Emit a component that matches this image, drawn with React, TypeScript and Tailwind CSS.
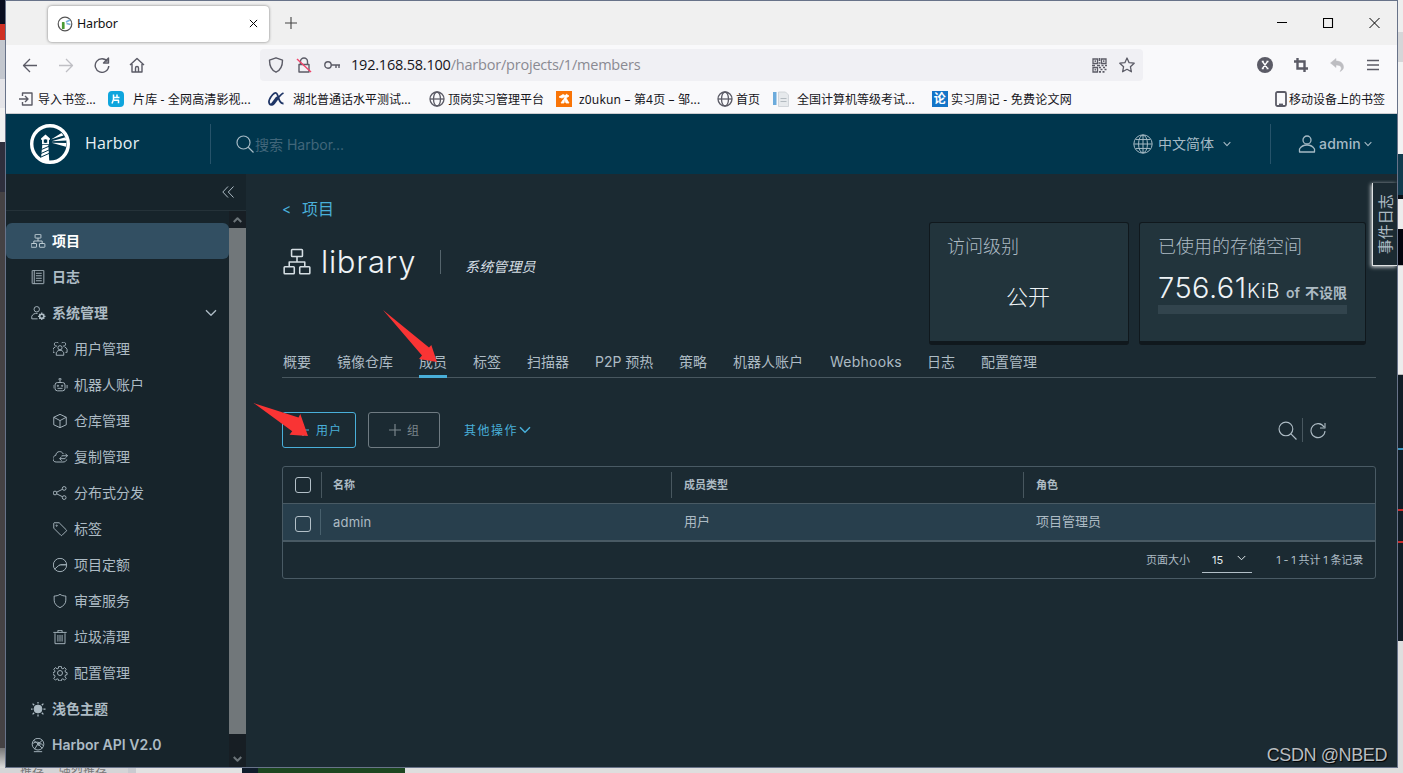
import type { ReactNode } from "react";

type IconProps = { className?: string; children: ReactNode; box?: string; stroke?: number };

function Svg({ className, children, box = "0 0 36 36", stroke = 2.2 }: IconProps) {
    return (
        <svg viewBox={box} className={className} fill="none" stroke="currentColor" strokeWidth={stroke} strokeLinejoin="round">
            {children}
        </svg>
    );
}

const paths: Record<string, ReactNode> = {
    org: <><rect x="11" y="2" width="14" height="9" rx="1" /><rect x="1.5" y="24" width="13" height="9" rx="1" /><rect x="21.5" y="24" width="13" height="9" rx="1" /><path d="M18 11v7M8 24v-6h20v6" /></>,
    log: <><rect x="4" y="2" width="28" height="32" rx="1" /><path d="M9 2v32M13 9h14M13 15h14M13 21h14M13 27h14" /></>,
    adminCog: <><circle cx="15" cy="9" r="6.5" /><path d="M17 32H3v-6c2-5 7-8 14-7" /><circle cx="27" cy="26" r="5" strokeWidth="4" /><path d="M27 17v4M27 31v4M18 26h4M32 26h4M21 20l3 3M30 29l3 3M33 20l-3 3M24 29l-3 3" strokeWidth="3" /></>,
    users: <><circle cx="18" cy="15" r="5" /><path d="M9 33v-6c2-4 5-6 9-6s7 2 9 6v6z" /><path d="M11 11a5 5 0 1 1 3-7M7 13c-3 1-5 3-6 6v7h4M25 11a5 5 0 1 0-3-7M29 13c3 1 5 3 6 6v7h-4" /></>,
    robot: <><circle cx="18" cy="4" r="2.5" /><path d="M18 7v5" /><rect x="6" y="12" width="24" height="20" rx="6" /><path d="M1 18v8M35 18v8M12 26h12" /><circle cx="13" cy="20" r="1.5" /><circle cx="23" cy="20" r="1.5" /></>,
    cube: <path d="M18 2l15 7v18l-15 7-15-7V9zM3 9l15 8 15-8M18 17v17" />,
    cloud: <><path d="M26 11c-2-4-5-6-9-6-5 0-9 4-9 9-4 1-7 4-7 8 0 5 3 8 8 8h16c5 0 8-2 9-6" /><path d="M36 15H22M31 10l5 5-5 5M31 22H18M22 17l-5 5 5 5" /></>,
    share: <><circle cx="28" cy="7" r="4.5" /><circle cx="28" cy="29" r="4.5" /><circle cx="6" cy="18" r="4.5" /><path d="M10 16l14-7M10 20l14 7" /></>,
    tag: <><path d="M3 4v12l17 17c1 1 2 1 3 0l10-10c1-1 1-2 0-3L16 3H4z" /><circle cx="10" cy="10" r="1.5" /></>,
    quota: <><circle cx="18" cy="18" r="16" /><path d="M5 28l9-8 5-3h15" /><path d="M15 19h18" strokeWidth="1" /></>,
    shield: <path d="M18 2c4 3 9 4 14 4v10c0 9-6 14-14 18C10 30 4 25 4 16V6c5 0 10-1 14-4z" />,
    trash: <path d="M6 9v25h24V9M2 7h32M13 6V2h10v4M13 13v16M18 13v16M23 13v16" />,
    cog: <><circle cx="18" cy="18" r="6" /><path d="M15 2h6l1 5 3 1 4-3 4 4-3 4 1 3 4 1v5l-4 1-1 4 3 4-4 4-4-3-3 1-1 4h-6l-1-4-3-1-4 3-4-4 3-4-1-4-4-1v-5l4-1 1-3-3-4 4-4 4 3 3-1z" /></>,
    sun: <><circle cx="18" cy="18" r="9.5" fill="currentColor" /><path d="M18 0v5M18 31v5M0 18h5M31 18h5M5 5l4 4M27 27l4 4M31 5l-4 4M9 27l-4 4" strokeWidth="3" /></>,
    api: <><circle cx="18" cy="16" r="14" /><path d="M8 34h20M8 7l12 10 8 9M28 7L16 18l-6 10M5 15c8-7 18-4 25 4" /><circle cx="20" cy="16" r="3" /></>,
    search: <><circle cx="15" cy="15" r="13" /><path d="M24.500 24.500L35 35" /></>,
    refresh: <path d="M30 12A14 14 0 1 0 32 20M32 4v10H22" />,
    globe: <><circle cx="18" cy="18" r="16.500" /><path d="M18 2v32M2 18h32M5 10h26M5 26h26" /><ellipse cx="18" cy="18" rx="8" ry="16" /></>,
    user: <><circle cx="18" cy="10" r="8" /><path d="M3 34v-6c3-5 8-8 15-8s12 3 15 8v6z" /></>,
    down: <path d="M3 10l15 15 15-15" />,
};

function Ico({ name, className, stroke }: { name: string; className?: string; stroke?: number }) {
    return <Svg className={className} stroke={stroke}>{paths[name]}</Svg>;
}

function Chevron({ className, stroke = 4 }: { className?: string; stroke?: number }) {
    return <Svg box="0 6 36 24" stroke={stroke} className={className}>{paths.down}</Svg>;
}

function TabBar() {
    return (
        <div className="flex h-11 items-center bg-[#f0f0f0] pl-[42px]">
            <div className="mt-px flex h-9 w-[221px] items-center rounded bg-white pr-[11px] pl-[9px] shadow-[0_0_3px_rgba(0,0,0,0.5)]">
                <Svg box="0 0 16 16" stroke={1.2} className="h-4 w-4 text-[#555]">
                    <circle cx="8" cy="8" r="6.8" />
                    <path d="M5.500 12.500V6.500h1.500v6z" fill="#4a9b35" stroke="#4a9b35" />
                    <path d="M9 6l4-2M9.500 7.500l4 1" stroke="#79b2dc" strokeWidth="1.800" />
                </Svg>
                <span className="ml-1 flex-1 pt-0.5 text-[12.500px] tracking-[-0.2px] text-[#111]">Harbor</span>
                <Svg box="0 0 10 10" stroke={1.1} className="h-[9px] w-[9px] text-black"><path d="M1 1l8 8M9 1L1 9" /></Svg>
            </div>
            <Svg box="0 0 12 12" stroke={1.1} className="ml-4 h-3 w-3 text-[#444]"><path d="M6 0v12M0 6h12" /></Svg>
            <div className="mr-[17px] ml-auto flex items-center gap-[35px] text-black">
                <Svg box="0 0 11 11" stroke={1} className="h-[11px] w-[11px]"><path d="M0 4.500h10" /></Svg>
                <Svg box="0 0 11 11" stroke={1.1} className="h-[11px] w-[11px]"><path d="M.5.5h9v9H.5z" strokeLinejoin="miter" /></Svg>
                <Svg box="0 0 11 11" stroke={1} className="h-[11px] w-[11px]"><path d="M.5 0l10 10M10.500 0l-10 10" /></Svg>
            </div>
        </div>
    );
}

function Toolbar() {
    return (
        <div className="flex h-10 items-center bg-[#f9f9fb] pl-4 text-[#5b5b66]">
            <Svg box="0 0 16 16" stroke={1.3} className="h-4 w-4"><path d="M15 8.500H1.500M8 2L1.500 8.500 8 15" /></Svg>
            <Svg box="0 0 16 16" stroke={1.3} className="ml-5 h-4 w-4 text-[#bfbfc4]"><path d="M1 8.500h13.500M8 2l6.500 6.500L8 15" /></Svg>
            <Svg box="0 0 16 16" stroke={1.4} className="ml-5 h-4 w-4"><path d="M13.500 4.500A6.800 6.800 0 1 0 14.800 9M14.500 1v5h-5z" /></Svg>
            <Svg box="0 0 16 16" stroke={1.4} className="ml-[19px] h-4 w-4"><path d="M1 8l7-6.500L15 8M3 7v8h10V7M6.500 15v-4a1.500 1.500 0 0 1 3 0v4" /></Svg>
            <div className="ml-[115px] flex h-8 w-[883px] items-center rounded bg-[#f0f0f4] pr-[8px] pl-2">
                <Svg box="0 0 16 16" stroke={1.4} className="h-4 w-4"><path d="M8 .8l6.500 2.400c0 6-2 10-6.500 12C3.500 13.200 1.500 9.200 1.500 3.200z" /></Svg>
                <Svg box="0 0 16 16" stroke={1.4} className="ml-3 h-4 w-4">
                    <path d="M4.500 7V4.500a3.500 3.500 0 0 1 7 0V7M3 7.500h10V15H3z" />
                    <path d="M1 2l14 13" stroke="#f0436a" />
                </Svg>
                <Svg box="0 0 16 16" stroke={1.4} className="ml-3 h-4 w-4"><circle cx="4" cy="8" r="3.200" /><path d="M7 8h9M12 8v3M15 8v3" /></Svg>
                <span className="ml-[11px] font-['Open_Sans'] text-[14.500px] tracking-[-0.21px] whitespace-nowrap text-[#8a8a92]"><span className="text-[#15141a]">192.168.58.100</span>/harbor/projects/1/members</span>
                <Svg box="0 0 15 15" stroke={1.3} className="ml-auto h-[15px] w-[15px]">
                    <path d="M1 1h4.500v4.500H1zM9.500 1H14v4.500H9.500zM1 9.500h4.500V14H1z" strokeLinejoin="miter" />
                    <path d="M2.600 3.200h1.300M11.100 3.200h1.300M2.600 11.700h1.300M7.500 0v3M6.500 5h2M0 7.500h3M5 7.500h3M9.500 7.500h2M13 7.500h2M7 9.500h2M11 9.500h2M8.500 11.500h2M12.500 11.500h2M7 13.800h2M10.500 13.800h2" strokeWidth="1.700" />
                </Svg>
                <Svg box="0 0 16 16" stroke={1.3} className="ml-3 h-4 w-4"><path d="M8 1l2.100 4.700 5.100.5-3.800 3.500 1 5.100L8 12.300l-4.400 2.500 1-5.100L.8 6.200l5.100-.5z" /></Svg>
            </div>
            <div className="ml-[114px] flex items-center">
                <Svg box="0 0 16 16" className="h-4 w-4"><circle cx="8" cy="8" r="8" fill="currentColor" stroke="none" /><path d="M5.500 4.500l5 7M10.500 4.500l-5 7M4.800 4.500h2M9.500 4.500h2M4.800 11.500h2M9.500 11.500h2" stroke="#fff" strokeWidth="1.300" /></Svg>
                <Svg box="0 0 16 16" stroke={2.4} className="ml-5 h-4 w-4"><path d="M4.500 1v10.500H15M1 4.500h10.500V15" strokeLinejoin="miter" /></Svg>
                <Svg box="0 0 16 16" stroke={1.5} className="ml-5 h-4 w-4 text-[#bdbdc1]"><path d="M7 1.500L1.500 6 7 10.500V8c3 0 5 .8 5.300 3 .2 1.500-.8 2.700-1.300 3.500 2-.8 3.800-2.500 3.500-5C14 5.800 11 4 7 4z" fill="currentColor" strokeWidth=".5" /></Svg>
                <Svg box="0 0 12 12" stroke={1.3} className="ml-[22px] h-3 w-3"><path d="M0 1.500h12M0 6h12M0 10.500h12" /></Svg>
            </div>
        </div>
    );
}

function WebGlobe() {
    return <Svg box="0 0 16 16" stroke={1.3} className="h-4 w-4 text-[#5b5b66]"><circle cx="8" cy="8" r="7" /><ellipse cx="8" cy="8" rx="3.500" ry="7" /><path d="M1 8h14" /></Svg>;
}

function Bookmark({ className, text, icon }: { className: string; text: string; icon: ReactNode }) {
    return <div className={"flex shrink-0 items-center whitespace-nowrap " + className}>{icon}<span className="pt-0.5">{text}</span></div>;
}

function Bookmarks() {
    return (
        <div className="flex h-7 items-center bg-[#f9f9fb] pl-3 text-[12px] text-[#15141a]">
            <Bookmark className="w-[90px] gap-1" text="导入书签..." icon={<Svg box="0 0 16 16" stroke={1.4} className="h-4 w-4 text-[#5b5b66]"><path d="M1 8h9M7 5l3 3-3 3M4.500 5V2H14v12H4.500v-3" /></Svg>} />
            <Bookmark className="w-[160px] gap-[9px] tracking-[0.15px]" text="片库 - 全网高清影视..." icon={<Svg box="0 0 16 16" stroke={1.5} className="h-4 w-4 text-white"><rect width="16" height="16" rx="4" fill="#0fa5dd" stroke="none" /><path d="M5.500 3.500v5L4 12.500M5.500 6.500h6M9 3.500v3M6 9.300h4.500v3" /></Svg>} />
            <Bookmark className="w-[161px] gap-[9px]" text="湖北普通话水平测试..." icon={<Svg box="0 0 16 16" stroke={1.8} className="h-4 w-4 text-[#1f3566]"><path d="M15.500 2C11 4 8 11 5 13.500 2 15 0 12 1.500 8.500 3 5 6 1.500 8 2c3 1 2 11 7.500 10.500M3 14L9 6" /></Svg>} />
            <Bookmark className="w-[127px] gap-[3px]" text="顶岗实习管理平台" icon={<WebGlobe />} />
            <Bookmark className="w-[161px] gap-[7px] tracking-[0.17px]" text="z0ukun – 第4页 – 邹..." icon={<Svg box="0 0 16 16" className="h-4 w-4"><rect width="16" height="16" fill="#f97407" stroke="none" /><path d="M3 6l4-2.500 3 1.500-4 2zM10 3l3 2-3 2 3 5h-3L8.500 8 8 12H5l2-3" fill="#fff" stroke="#fff" strokeWidth=".8" /></Svg>} />
            <Bookmark className="w-14 gap-[3px]" text="首页" icon={<WebGlobe />} />
            <Bookmark className="w-[159px] gap-2" text="全国计算机等级考试..." icon={<Svg box="0 0 16 16" className="h-4 w-4"><rect x="0" y="1" width="3.500" height="13" fill="#6cabdc" stroke="none" /><path d="M5.500 1h7l3 3v11.500h-10z" fill="#e6e9ec" stroke="#c9ced3" strokeWidth=".8" /><path d="M7.500 7.500h6M7.500 10.500h6" stroke="#b3bac0" strokeWidth="1" /></Svg>} />
            <Bookmark className="gap-[3px] tracking-[0.25px]" text="实习周记 - 免费论文网" icon={<span className="flex h-4 w-4 items-center justify-center bg-[#1475c8] text-[12px] leading-4 font-bold text-white">论</span>} />
            <Bookmark className="mr-3 ml-auto gap-[2px]" text="移动设备上的书签" icon={<Svg box="0 0 12 16" stroke={1.8} className="h-4 w-3 text-[#5b5b66]"><rect x="1" y="1" width="10" height="14" rx="1.500" /><path d="M4 13.500h4" /></Svg>} />
        </div>
    );
}

function Logo() {
    return (
        <svg viewBox="0 0 40 40" className="h-10 w-10">
            <circle cx="20" cy="20" r="18.300" fill="none" stroke="#fff" strokeWidth="3.400" />
            <path d="M10.800 36l1.500-15h6l1 16.500z" fill="#fff" />
            <path d="M11 14.500l4.500-4 4.500 4v1.200h-1v4.600h-7v-4.600h-1z" fill="#fff" />
            <path d="M13.800 15.500h3.400v3.300h-3.400z" fill="#00364d" />
            <path d="M15.500 15.500v3.300M11.500 25.500l8-3.500M11 29.500l9-4M11 33l9-4" stroke="#00364d" strokeWidth="1" />
            <path d="M21 15.500l10.500-6.500 2 2.600zM21.500 17.200l14-4 .9 3.300zM21.500 18.700l14.800.2-.4 3.800z" fill="#fff" />
        </svg>
    );
}

function Header() {
    return (
        <header className="flex h-[60px] items-center bg-[#00364d] pl-6 text-[#a5bac5]">
            <Logo />
            <span className="mb-0.5 ml-[15px] w-[125px] font-['Open_Sans'] text-[16px] tracking-[0.2px] text-[#e9f1f5]">Harbor</span>
            <div className="h-10 w-px bg-[#26536a]" />
            <Ico name="search" className="ml-[25px] h-[18px] w-[18px]" stroke={2.4} />
            <span className="ml-px text-[14px] text-[#41667a]">搜索 Harbor...</span>
            <Ico name="globe" className="ml-auto h-5 w-5" stroke={1.8} />
            <span className="mb-0.5 ml-[5px] w-[57px] text-[14px]">中文简体</span>
            <Chevron className="ml-2 h-[6px] w-2" stroke={5} />
            <div className="ml-[39px] h-10 w-px bg-[#26536a]" />
            <Ico name="user" className="ml-[27px] h-5 w-[18px]" stroke={2.6} />
            <span className="mb-0.5 ml-[3px] w-[42px] text-[14px] font-medium tracking-[0.2px]">admin</span>
            <Chevron className="mr-[25px] ml-[3px] h-[6px] w-2" stroke={5} />
        </header>
    );
}

const systemItems = [
    { icon: "users", text: "用户管理" },
    { icon: "robot", text: "机器人账户" },
    { icon: "cube", text: "仓库管理" },
    { icon: "cloud", text: "复制管理" },
    { icon: "share", text: "分布式分发" },
    { icon: "tag", text: "标签" },
    { icon: "quota", text: "项目定额" },
    { icon: "shield", text: "审查服务" },
    { icon: "trash", text: "垃圾清理" },
    { icon: "cog", text: "配置管理" },
];

function NavItem({ icon, text, active, open }: { icon: string; text: string; active?: boolean; open?: boolean }) {
    return (
        <div className={"flex h-9 items-center pl-6 font-semibold " + (active ? "rounded-md bg-[#324f62] text-white" : "")}>
            <Ico name={icon} className={"h-4 w-4 p-[0.5px] " + (active ? "text-[#c8d5dc]" : "")} />
            <span className="mb-0.5 ml-[6px] flex-1">{text}</span>
            {open && <Chevron stroke={4} className="mr-3 h-2 w-3" />}
        </div>
    );
}

function Sidebar() {
    return (
        <aside className="flex w-60 flex-col bg-[#17242b] text-[14px] text-[#adbbc4]">
            <div className="flex h-[37px] items-center justify-end border-b border-[#253239] pr-3">
                <Svg box="0 0 12 12" stroke={1} className="h-3 w-3"><path d="M6 .5L.8 6 6 11.500M11.500.5L6.300 6l5.200 5.500" /></Svg>
            </div>
            <div className="flex flex-1">
                <nav className="w-[223px] pt-3">
                    <NavItem icon="org" text="项目" active />
                    <NavItem icon="log" text="日志" />
                    <NavItem icon="adminCog" text="系统管理" open />
                    {systemItems.map((item) => (
                        <div key={item.text} className="flex h-9 items-center pl-[46px]">
                            <Ico name={item.icon} className="h-4 w-4 p-[0.5px]" />
                            <span className="mb-0.5 ml-[6px]">{item.text}</span>
                        </div>
                    ))}
                    <NavItem icon="sun" text="浅色主题" />
                    <NavItem icon="api" text="Harbor API V2.0" />
                </nav>
                <div className="flex flex-1 flex-col items-center bg-[#171e24] text-[#6c7479]">
                    <div className="flex h-[17px] items-center"><Chevron stroke={8} className="h-[6px] w-[9px] rotate-180" /></div>
                    <div className="h-[506px] w-full bg-[#71777a]" />
                    <div className="flex flex-1 items-center pt-4"><Chevron stroke={8} className="h-[6px] w-[9px]" /></div>
                </div>
            </div>
        </aside>
    );
}

const tabs = [
    { text: "概要", width: "w-7" },
    { text: "镜像仓库", width: "w-14" },
    { text: "成员", width: "w-7", active: true },
    { text: "标签", width: "w-7" },
    { text: "扫描器", width: "w-[42px]" },
    { text: "P2P 预热", width: "w-[58px]" },
    { text: "策略", width: "w-7" },
    { text: "机器人账户", width: "w-[71px]" },
    { text: "Webhooks", width: "w-[71px] tracking-[0.25px]" },
    { text: "日志", width: "w-7" },
    { text: "配置管理", width: "w-14" },
];

function Cards() {
    return (
        <div className="mr-[10px] flex gap-[10px] text-[#adbbc4]">
            <div className="h-[123px] w-[200px] rounded-[3px] border border-b-4 border-[#10181d] bg-[#22343c] px-[17px] pt-[11px]">
                <div className="text-[18px] leading-[26px] font-light">访问级别</div>
                <div className="mt-[21px] pr-[2px] text-center text-[22px] leading-8 font-light text-[#eef3f6]">公开</div>
            </div>
            <div className="h-[123px] w-[227px] rounded-[3px] border border-b-4 border-[#10181d] bg-[#22343c] px-[18px] pt-[11px]">
                <div className="text-[18px] leading-[26px] font-light">已使用的存储空间</div>
                <div className="mt-[11px] flex h-[34px] items-baseline whitespace-nowrap text-[#eef3f6]">
                    <span className="w-[89px] text-[29px] leading-[34px] font-light tracking-[0.45px]">756.61</span>
                    <span className="w-[39px] text-[20px] font-light tracking-[0.8px]">KiB</span>
                    <span className="w-[19px] text-[14px] font-semibold text-[#adbbc4]">of</span>
                    <span className="text-[14px] font-bold text-[#adbbc4]">不设限</span>
                </div>
                <div className="h-[9px] w-[189px] bg-[#32444d]" />
            </div>
        </div>
    );
}

function Checkbox() {
    return <div className="h-4 w-4 rounded-[3px] border border-[#b3c0c8]" />;
}

function Members() {
    return (
        <>
            <div className="mt-[34px] flex h-9 items-center text-[12px] tracking-[1px]">
                <div className="flex h-9 w-[74px] items-center rounded-[3px] border border-[#49afd9] pl-[14px] text-[#49afd9]">
                    <Svg box="0 0 12 12" stroke={1.2} className="h-3 w-3"><path d="M6 0v12M0 6h12" /></Svg>
                    <span className="mt-0.5 ml-[7px]">用户</span>
                </div>
                <div className="ml-3 flex h-9 w-[72px] items-center rounded-[3px] border border-[#6f7b82] pl-5 text-[#7a858b]">
                    <Svg box="0 0 12 12" stroke={1.2} className="h-3 w-3"><path d="M6 0v12M0 6h12" /></Svg>
                    <span className="mt-0.5 ml-[6px]">组</span>
                </div>
                <div className="ml-6 flex items-center text-[#49afd9]">
                    <span className="mt-0.5 tracking-[1.500px]">其他操作</span>
                    <Chevron stroke={4.5} className="ml-px h-[8px] w-3" />
                </div>
                <Ico name="search" className="ml-auto h-[19px] w-[19px]" />
                <div className="ml-[5px] h-6 w-px bg-[#48575f]" />
                <Ico name="refresh" className="mr-[49px] ml-[6px] h-[18px] w-[18px]" />
            </div>
            <div className="mt-[18px] h-[113px] rounded-[3px] border border-[#495a64]">
                <div className="flex h-9 items-center text-[11px] font-bold">
                    <div className="flex w-[38px] items-center pb-px pl-3"><Checkbox /></div>
                    <div className="flex h-[26px] w-[350px] items-center border-l border-[#48575f] pt-px pl-[11px]">名称</div>
                    <div className="flex h-[26px] w-[352px] items-center border-l border-[#48575f] pt-px pl-3">成员类型</div>
                    <div className="flex h-[26px] items-center border-l border-[#48575f] pt-px pl-3">角色</div>
                </div>
                <div className="flex h-[39px] items-center border-t border-b-2 border-[#495a64] bg-[#283f4d] text-[13px]">
                    <div className="flex w-[37px] items-center pt-[3px] pl-3"><Checkbox /></div>
                    <div className="flex h-[26px] w-[351px] items-center border-l border-[#48606d] pt-0.5 pl-3 tracking-[0.2px]">admin</div>
                    <div className="w-[352px] pl-[13px]">用户</div>
                    <div className="pl-[13px]">项目管理员</div>
                </div>
                <div className="flex h-9 items-center justify-end pr-3 text-[11px]">
                    <span className="pt-px">页面大小</span>
                    <div className="ml-3 flex h-[25px] w-[50px] items-center justify-between border-b border-[#b3c0c8] px-[10px] pr-[6px] text-[#e3eaee]">
                        <span className="pt-0.5">15</span>
                        <Chevron className="mb-1 h-[6px] w-[9px]" />
                    </div>
                    <span className="ml-6 w-[87px] pt-px text-right tracking-[-0.15px] whitespace-nowrap">1 - 1 共计 1 条记录</span>
                </div>
            </div>
        </>
    );
}

function Content() {
    return (
        <main className="flex-1 bg-[#1b2a32] pt-6 pr-[21px] pl-9 text-[#adbbc4]">
            <div className="flex h-6 items-center pb-0.5 text-[16px] leading-[22px] text-[#49afd9]"><span className="w-5 text-[14px]">&lt;</span><span>项目</span></div>
            <div className="flex h-[123px] items-start">
                <div className="flex h-20 flex-1 items-center">
                    <Ico name="org" className="h-[30px] w-[30px] p-px text-[#d5dee3]" stroke={2} />
                    <span className="ml-[9px] w-[119px] text-[31px] leading-9 font-light tracking-[0.7px] text-[#eef3f6]">library</span>
                    <div className="h-6 w-px bg-[#55646c]" />
                    <span className="mt-[8px] ml-6 text-[14px] tracking-[0.15px] text-[#d5dee3] italic">系统管理员</span>
                </div>
                <Cards />
            </div>
            <div className="flex h-[33px] gap-[26px] border-b border-[#48575f] pl-px text-[14px] leading-[34px] whitespace-nowrap">
                {tabs.map((tab) => (
                    <div key={tab.text} className={tab.width + (tab.active ? " h-[33px] border-b-3 border-[#49afd9]" : "")}>{tab.text}</div>
                ))}
            </div>
            <Members />
        </main>
    );
}

function EventLog() {
    return (
        <div className="absolute top-[180px] right-[6px] h-[92px] w-[32px] overflow-hidden pt-[3px] pb-[6px] pl-[7px]">
            <div className="flex h-full w-full items-center justify-center border-b border-l border-[#dfe2e3] bg-[#1b2a32] pl-px shadow-[-1px_1px_4px_#d8dcde]">
                <span className="-rotate-90 text-[15px] whitespace-nowrap text-[#adbbc4]">事件日志</span>
            </div>
        </div>
    );
}

// windows peeking out on both sides of the browser
function LeftEdge() {
    return (
        <div className="flex w-[5px] flex-col overflow-hidden">
            <div className="h-6 bg-[#090e20]" />
            <div className="h-4 bg-[#cf3024]" />
            <div className="h-[39px] bg-[#c3c7ce]" />
            <div className="h-[29px] bg-[#e4e4e8]" />
            <div className="h-[34px] bg-[#f0f0f0]" />
            <div className="h-[50px] bg-[#2e2f3d]" />
            <div className="h-[556px] bg-[#454244]" />
            <div className="flex-1 bg-linear-to-b from-[#777] to-[#ddd]" />
        </div>
    );
}

function RightEdge() {
    return (
        <div className="flex w-[5px] flex-col">
            <div className="h-8 bg-[#eee]" />
            <div className="h-[30px] bg-[#d5d6d8]" />
            <div className="h-[92px] bg-[#f2f2f2]" />
            <div className="h-[41px] bg-[#123b4e]" />
            <div className="h-1 bg-[#0b1016]" />
            <div className="h-[30px] bg-[#ececec]" />
            <div className="h-9 bg-[#03050d]" />
            <div className="h-[110px] border-y border-[#bbb] bg-[#ececec]" />
            <div className="h-[73px] bg-[#111d26]" />
            <div className="h-[2px] bg-[#3b93bd]" />
            <div className="h-[59px] bg-[#111d26]" />
            <div className="h-[2px] bg-[#c92b2b]" />
            <div className="h-[30px] bg-[#111d26]" />
            <div className="h-[2px] bg-[#c92b2b]" />
            <div className="h-[98px] bg-[#111d26]" />
            <div className="flex-1 bg-[#dedede]" />
        </div>
    );
}

function App() {
    return (
        <div className="relative flex h-[773px] w-[1403px] flex-col overflow-hidden bg-[#dedede] font-[Inter,'Noto_Sans_CJK_SC',sans-serif]">
            <div className="flex h-[768px]">
                <LeftEdge />
                <div className="flex w-[1393px] flex-col border border-[#687389]">
                    <div className="border-b border-[#ccccd0] font-['Noto_Sans','Noto_Sans_CJK_SC',sans-serif]">
                        <TabBar />
                        <Toolbar />
                        <Bookmarks />
                    </div>
                    <Header />
                    <div className="flex flex-1">
                        <Sidebar />
                        <Content />
                    </div>
                </div>
                <RightEdge />
            </div>
            <div className="flex h-[5px] overflow-hidden text-[12px] leading-[5px] text-[#777]">
                <div className="flex w-[128px] gap-[15px] bg-[#d5d5d7] pl-5"><span>推荐</span><span>强烈推荐</span></div>
                <div className="w-2 bg-[#c9cbd0]" />
                <div className="w-[106px] bg-[#e2e2e2]" />
                <div className="w-4 bg-[#101c2b]" />
                <div className="w-[147px] bg-[#1c4620]" />
            </div>
            <EventLog />
            <svg viewBox="0 0 200 140" className="absolute top-[300px] left-[249px] h-[140px] w-[200px]">
                <path d="M134 10l46 37.500 2.300-2.500L188 62l-18-3 3-3.500zM4.500 103l45 14.500 1.800-3.500L59 136l-18.500-1.200 2.700-3.500z" fill="#f93434" />
            </svg>
            <div className="absolute right-4 bottom-[7px] font-['Liberation_Sans'] text-[18px] leading-[22px] tracking-[-0.4px] whitespace-nowrap text-[#b9bdc0] [text-shadow:1px_1px_1px_#000]">CSDN @NBED</div>
        </div>
    );
}
export default App;
